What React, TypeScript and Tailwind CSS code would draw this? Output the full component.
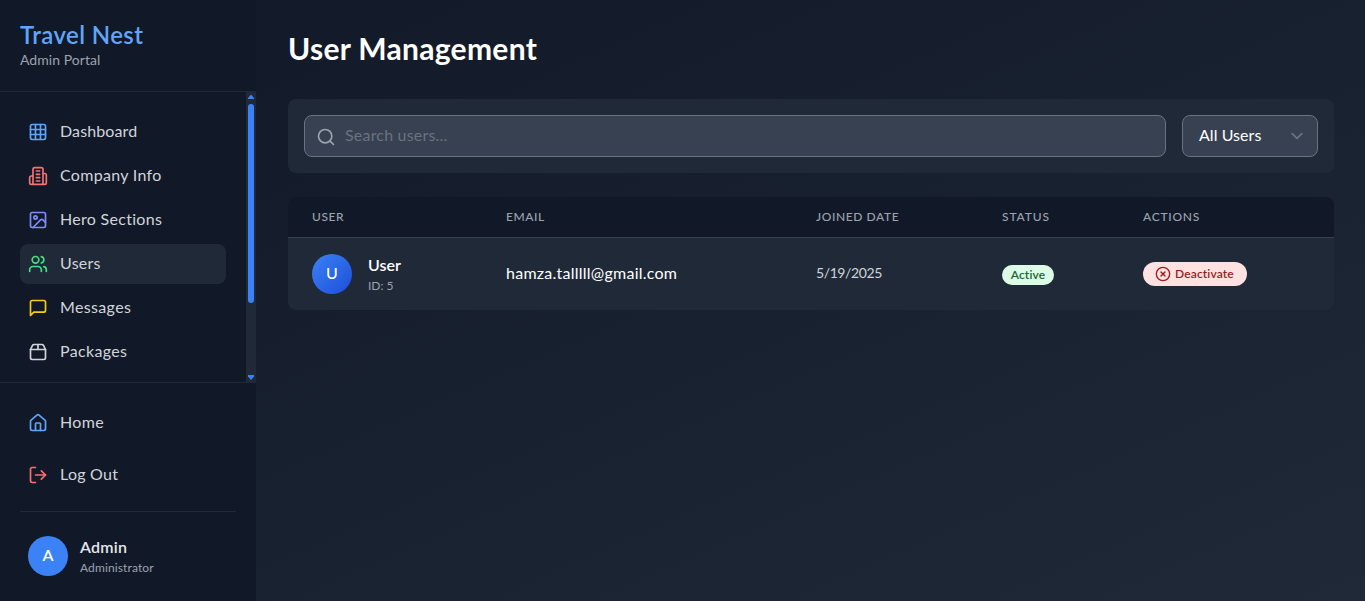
import type { ComponentType } from 'react';
import { CircleX, Grid3x3, House, Image, LogOut, Search, Users } from 'lucide-react';

type IconProps = { className?: string; size?: number };

function outline(paths: string[]) {
  return function OutlineIcon({ className = '', size = 20 }: IconProps) {
    return (
      <svg
        width={size}
        height={size}
        viewBox="0 0 24 24"
        fill="none"
        stroke="currentColor"
        strokeWidth="2"
        strokeLinecap="round"
        strokeLinejoin="round"
        className={className}
      >
        {paths.map((d) => (
          <path key={d} d={d} />
        ))}
      </svg>
    );
  };
}

const PackageIcon = outline([
  'M3 9h18v10a2 2 0 0 1-2 2H5a2 2 0 0 1-2-2V9Z',
  'm3 9 2.45-4.9A2 2 0 0 1 7.24 3h9.52a2 2 0 0 1 1.8 1.1L21 9',
  'M12 3v6',
]);

const BuildingIcon = outline([
  'M6 22V4a2 2 0 0 1 2-2h8a2 2 0 0 1 2 2v18Z',
  'M6 12H4a2 2 0 0 0-2 2v6a2 2 0 0 0 2 2h2',
  'M18 9h2a2 2 0 0 1 2 2v9a2 2 0 0 1-2 2h-2',
  'M10 6h4',
  'M10 10h4',
  'M10 14h4',
  'M10 18h4',
]);

const MessageIcon = outline(['M21 15a2 2 0 0 1-2 2H7l-4 4V5a2 2 0 0 1 2-2h14a2 2 0 0 1 2 2z']);

type Item = { label: string; icon: ComponentType<IconProps>; color: string; tracking: string; active?: boolean };

const items: Item[] = [
  { label: 'Dashboard', icon: Grid3x3, color: 'text-[#60a5fa]', tracking: 'tracking-[0.12px]' },
  { label: 'Company Info', icon: BuildingIcon, color: 'text-[#f87171]', tracking: 'tracking-[0.3px]' },
  { label: 'Hero Sections', icon: Image, color: 'text-[#818cf8]', tracking: 'tracking-[0.3px]' },
  { label: 'Users', icon: Users, color: 'text-[#4ade80]', tracking: 'tracking-[0.25px]', active: true },
  { label: 'Messages', icon: MessageIcon, color: 'text-[#facc15]', tracking: 'tracking-[0.35px]' },
  { label: 'Packages', icon: PackageIcon, color: 'text-[#d1d5db]', tracking: 'tracking-[0.35px]' },
];

function NavItem({ item }: { item: Item }) {
  const Icon = item.icon;
  return (
    <a className={`flex h-10 shrink-0 items-center gap-3 rounded-lg px-2 text-[#d1d5db] ${item.active ? 'bg-[#1f2937]' : ''}`}>
      <Icon size={20} className={`shrink-0 ${item.color}`} />
      <span className={`pb-0.5 whitespace-nowrap ${item.tracking}`}>{item.label}</span>
    </a>
  );
}

function Sidebar() {
  return (
    <aside className="flex h-full w-64 shrink-0 flex-col bg-[#111827]">
      <div className="h-[92px] border-b border-[#1f2937] px-5 pt-5">
        <h2 className="text-2xl leading-[30px] font-semibold tracking-[0.4px] text-[#60a5fa]">Travel Nest</h2>
        <p className="text-sm leading-5 tracking-[0.05px] text-[#9ca3af]">Admin Portal</p>
      </div>
      <div className="flex h-[290px] shrink-0">
        <nav className="flex w-[246px] flex-col gap-1 overflow-hidden p-5">
          {items.map((item) => (
            <NavItem key={item.label} item={item} />
          ))}
        </nav>
        <div className="flex w-2.5 flex-col items-center bg-[#1f2937]">
          <svg width="6" height="12" viewBox="0 0 6 12" fill="#3b82f6">
            <path d="M3 2.500 6 6v1H0V6Z" />
          </svg>
          <div className="h-[199px] w-1.5 rounded-full bg-[#3b82f6]" />
          <div className="grow" />
          <svg width="6" height="7" viewBox="0 0 6 7" fill="#3b82f6">
            <path d="M0 0h6v1.500L3 5 0 1.500Z" />
          </svg>
        </div>
      </div>
      <div className="grow border-t border-[#1f2937] px-5 pt-5">
        <div className="flex flex-col gap-3">
          <NavItem item={{ label: 'Home', icon: House, color: 'text-[#60a5fa]', tracking: 'tracking-[0.35px]' }} />
          <NavItem item={{ label: 'Log Out', icon: LogOut, color: 'text-[#f87171]', tracking: 'tracking-[0.25px]' }} />
        </div>
        <div className="mt-4 flex items-center gap-3 border-t border-[#1f2937] px-2 pt-6">
          <div className="flex h-10 w-10 items-center justify-center rounded-full bg-[#3b82f6] pb-0.5 font-semibold text-white">A</div>
          <div>
            <p className="-mt-px mb-px leading-6 font-semibold tracking-[0.2px] text-[#e5e7eb]">Admin</p>
            <p className="text-xs leading-4 tracking-[0.12px] text-[#9ca3af]">Administrator</p>
          </div>
        </div>
      </div>
    </aside>
  );
}

const columns = 'grid grid-cols-[194px_310px_186px_141px_1fr]';

export default function App() {
  return (
    <div className="flex h-[601px] w-full overflow-hidden bg-linear-to-br/srgb from-[#111827] to-[#1f2937] font-[Lato,sans-serif] text-base [font-variant-ligatures:none]">
      <Sidebar />
      <main className="min-w-0 grow pt-[30px] pr-[31px] pl-8">
        <h1 className="text-3xl leading-9 font-bold tracking-[0.3px] text-white">User Management</h1>

        <div className="mt-[33px] flex gap-4 rounded-lg bg-[#1f2937] p-4">
          <div className="flex h-[42px] grow items-center gap-[9px] rounded-lg border border-[#6b7280] bg-[#374151] pl-[11px]">
            <Search size={20} className="mt-0.5 text-[#9ca3af]" />
            <span className="pb-0.5 tracking-[0.2px] text-[#6b7280]">Search users...</span>
          </div>
          <div className="flex h-[42px] w-[136px] items-center justify-between rounded-lg border border-[#6b7280] bg-[#374151] pr-2 pl-4 text-white">
            <span className="pb-0.5 tracking-[0.05px]">All Users</span>
            <svg width="24" height="24" viewBox="0 0 20 20" fill="none" stroke="#6b7280" strokeWidth="1.5" strokeLinecap="round" strokeLinejoin="round">
              <path d="m6 8 4 4 4-4" />
            </svg>
          </div>
        </div>

        <div className="mt-6 overflow-hidden rounded-lg bg-[#1f2937]">
          <div className={`${columns} h-[41px] items-center border-b border-[#374151] bg-[#111827] text-xs font-medium tracking-wider text-[#9ca3af] uppercase`}>
            <span className="pl-6">User</span>
            <span className="pl-6">Email</span>
            <span className="pl-6">Joined Date</span>
            <span className="pl-6 tracking-[0.9px]">Status</span>
            <span className="pl-6 tracking-[0.75px]">Actions</span>
          </div>
          <div className={`${columns} h-[72px] items-center`}>
            <div className="flex items-center gap-4 pl-6">
              <div className="flex h-10 w-10 items-center justify-center rounded-full bg-linear-to-br/srgb from-[#3b82f6] to-[#1d4ed8] pb-0.5 font-medium text-white">U</div>
              <div>
                <p className="-mt-px mb-px leading-6 font-semibold text-white">User</p>
                <p className="text-xs leading-4 text-[#9ca3af]">ID: 5</p>
              </div>
            </div>
            <div className="pb-0.5 pl-6 tracking-[0.25px] text-white">hamza.talllll@gmail.com</div>
            <div className="pb-0.5 pl-6 text-sm tracking-[-0.4px] text-[#d1d5db]">5/19/2025</div>
            <div className="pt-0.5 pl-6">
              <span className="flex h-5 w-[52px] items-center justify-center rounded-full bg-[#dcfce7] text-xs font-semibold tracking-[0.15px] text-[#166534]">Active</span>
            </div>
            <div className="pl-6">
              <button className="flex h-6 w-[104px] items-center gap-1 rounded-full bg-[#fee2e2] pl-3 text-xs font-semibold text-[#991b1b]">
                <CircleX size={16} />
                <span className="tracking-[0.15px]">Deactivate</span>
              </button>
            </div>
          </div>
        </div>
      </main>
    </div>
  );
}
